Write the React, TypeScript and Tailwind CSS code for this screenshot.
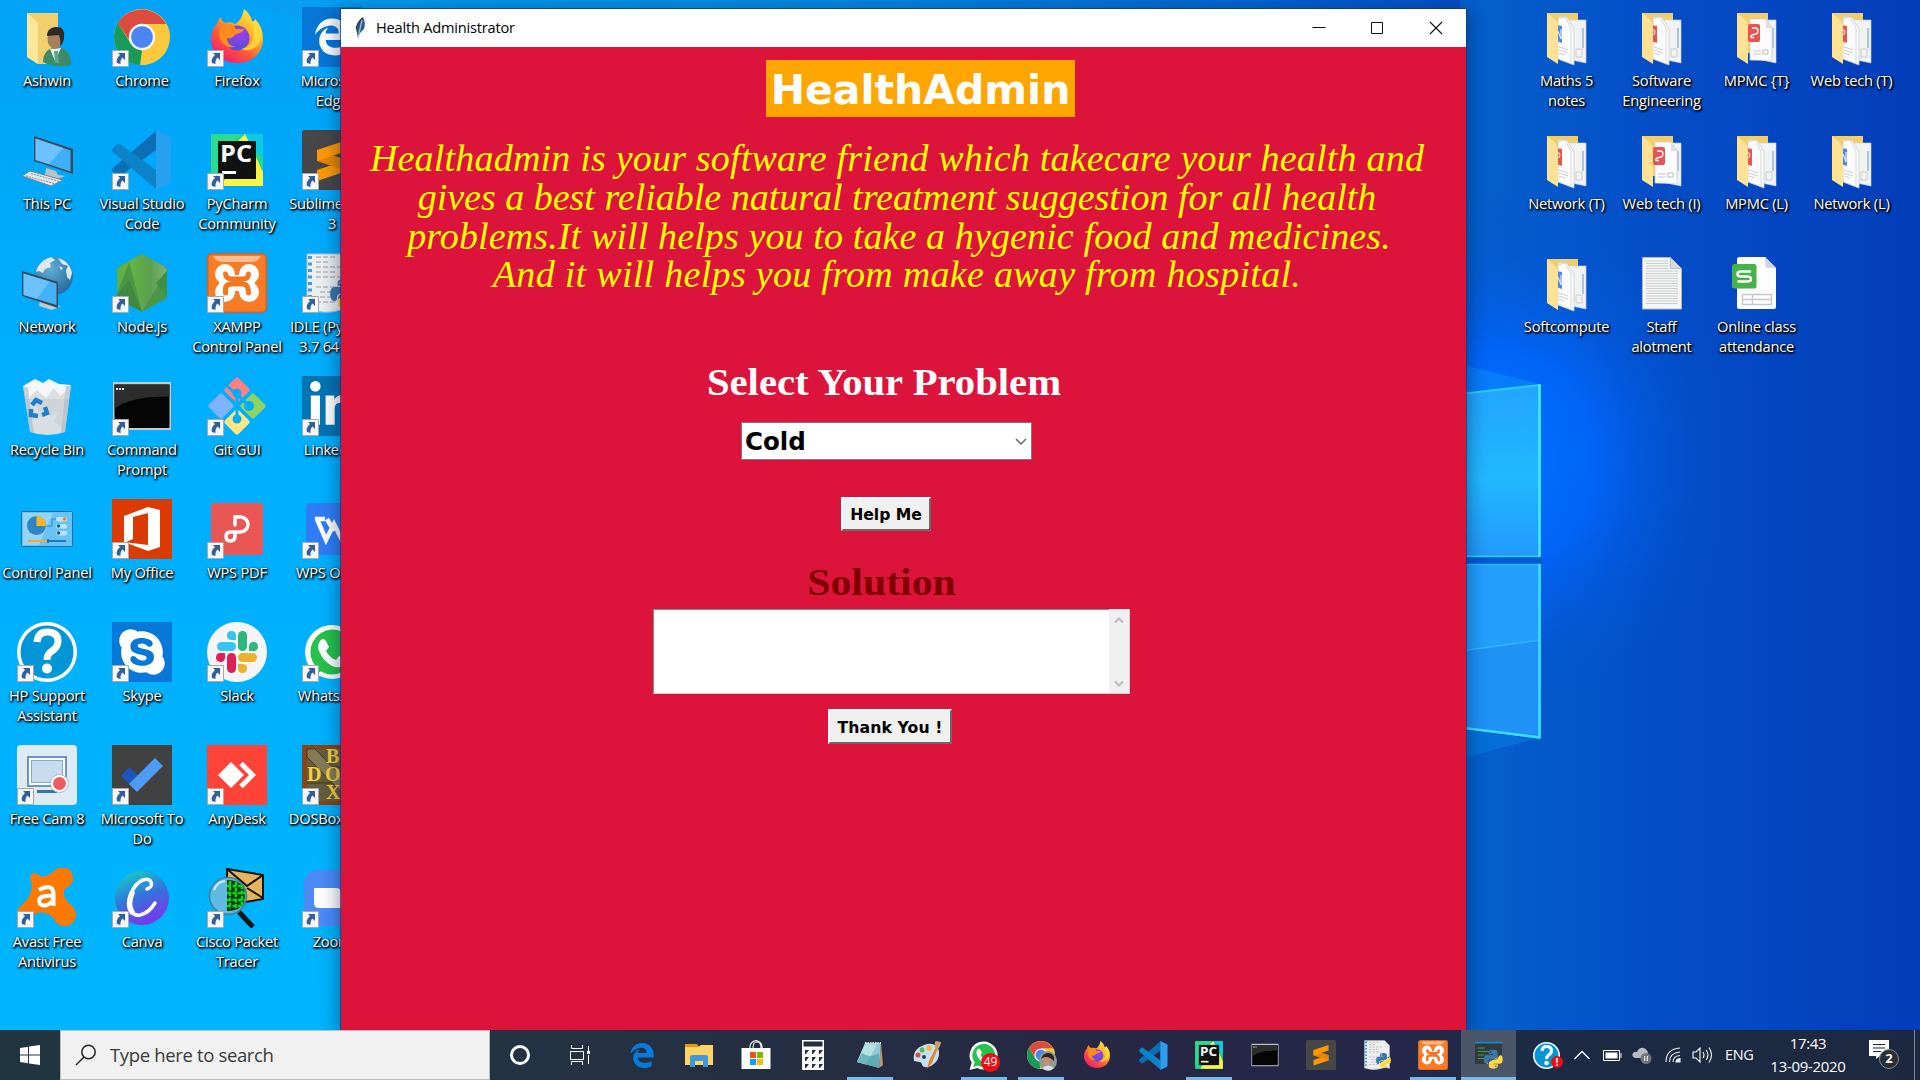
import React from "react";
import { FaEdgeLegacy, FaLinkedinIn, FaPython, FaSkype } from "react-icons/fa6";

type IconProps = { className?: string };

function Art({ className = "h-[60px] w-[60px]", children }: { className?: string; children: React.ReactNode }) {
  return (
    <svg viewBox="0 0 60 60" className={className}>
      {children}
    </svg>
  );
}

/* ---------- desktop icons ---------- */

const UserFolder = ({ className }: IconProps) => (
  <Art className={className}>
    <path d="M10 6h31v51H21L10 50z" fill="#f2cf6b" />
    <path d="M10 6l11 10v41l-11-7z" fill="#ffe79a" />
    <path d="M26 55c0-9 5-13 10-14h7c7 1 11 6 11 17-9 2-20 2-28-3z" fill="#3f8a66" />
    <path d="M33 42l5 12 6-13z" fill="#e8eef0" />
    <path d="M37 44h4l1 12h-4z" fill="#59a78c" />
    <ellipse cx="38" cy="32" rx="7.5" ry="10" fill="#a77f5c" />
    <path d="M30 29c0-7 5-9 10-9 6 0 8 5 7 10 0 4-2 8-4 9 1-4 0-8-1-11z" fill="#2e2a28" />
  </Art>
);

const Chrome = ({ className }: IconProps) => (
  <Art className={className}>
    <circle cx="30" cy="30" r="28" fill="#fdc93a" />
    <path d="M5.8 16A28 28 0 0 1 54.200 17H30L19 36z" fill="#dd4b3e" />
    <path d="M5.800 16L19 37 30 44 28 57.900A28 28 0 0 1 5.800 16z" fill="#169b58" />
    <path d="M30 17h24.200A28 28 0 0 1 29 58l12-21z" fill="#fdc93a" />
    <circle cx="30" cy="30" r="13.200" fill="#f5f5f5" />
    <circle cx="30" cy="30" r="10.800" fill="#4a86f3" />
  </Art>
);

const Firefox = ({ className }: IconProps) => (
  <Art className={className}>
    <defs>
      <linearGradient id="ffBody" x1="0.9" y1="0" x2="0.2" y2="1">
        <stop offset="0" stopColor="#fff44f" />
        <stop offset="0.35" stopColor="#ffb72a" />
        <stop offset="0.65" stopColor="#ff5a36" />
        <stop offset="1" stopColor="#f0127a" />
      </linearGradient>
      <radialGradient id="ffCore" cx="0.6" cy="0.3" r="0.8">
        <stop offset="0" stopColor="#a43bf0" />
        <stop offset="1" stopColor="#4d4fd6" />
      </radialGradient>
    </defs>
    <path d="M37 2c5 4 7 8 8 12 2 1 3 0 3-2 6 7 8 13 8 20 0 14-11 24-26 24S4 45 4 32c0-7 3-12 6-15 0-3 2-5 4-7 0 3 2 5 4 6 3-1 7-1 10 1 4-2 7-6 9-15z" fill="url(#ffBody)" />
    <circle cx="30" cy="31" r="12.500" fill="url(#ffCore)" />
    <path d="M14 17c6-2 13 0 15 5h8c-1 4-6 4-9 6-3 3-5 4-8 3 0 4 3 8 8 9-9 2-16-5-16-13 0-4 1-7 2-10z" fill="#ff8a1f" />
    <path d="M37 2c8 7 9 14 10 22 1 11-6 17-13 18 10 4 20-3 21-14 0-6-2-11-7-16 0 2-1 3-3 2-1-4-3-8-8-12z" fill="#ffdc3c" opacity="0.85" />
  </Art>
);

const EdgeTile = () => (
  <div className="flex h-[60px] w-[60px] items-center justify-center bg-[#0677d7]">
    <FaEdgeLegacy className="h-[42px] w-[38px] text-white" />
  </div>
);

const ThisPC = ({ className }: IconProps) => (
  <Art className={className}>
    <path d="M29 38l10 3 2 4 8 1-9 3-12-4z" fill="#b9c2c8" />
    <path d="M17 6l39 13v25L17 31z" fill="#3a4a58" />
    <path d="M18.500 8.500l35 12v21L18.500 30z" fill="#3fb0f8" />
    <path d="M18.500 8.500l28 9.600L32 34l-13.500-4z" fill="#7fcbff" opacity="0.7" />
    <path d="M5 46l8-5 33 9-12 6z" fill="#e3e6e8" stroke="#77828a" />
    <path d="M9 46l30 8M14 43.500l28 8" stroke="#8a949b" strokeDasharray="2 1" />
  </Art>
);

const VsCode = ({ className }: IconProps) => (
  <Art className={className}>
    <path d="M44 1v19L8 46q-2 1-4-1l-3-3q-2-2 0-4z" fill="#0a70b3" />
    <path d="M44 59V40L8 14q-2-1-4 1l-3 3q-2 2 0 4z" fill="#0c83c8" />
    <path d="M44 0l13 6q2 1 2 3v42q0 2-2 3l-13 6z" fill="#27a0f0" />
  </Art>
);

const PyCharm = ({ className }: IconProps) => (
  <Art className={className}>
    <path d="M4 4h52v52H4z" fill="#21d789" />
    <path d="M32 4h24v24L42 14z" fill="#0bcbe0" />
    <path d="M30 12l8-8 5 10 13 28v14H14l8-14z" fill="#f5f549" />
    <path d="M4 4h30L4 50z" fill="#2adb90" />
    <path d="M11 11h38v38H11z" fill="#111" />
    <text x="13" y="32" fontSize="24" fontWeight="700" fill="#fff" fontFamily="Open Sans, sans-serif" textLength="32" lengthAdjust="spacingAndGlyphs">PC</text>
    <path d="M15 41h14v3H15z" fill="#fff" />
  </Art>
);

const Sublime = ({ className }: IconProps) => (
  <Art className={className}>
    <rect width="60" height="60" rx="3" fill="#474747" />
    <path d="M45 30L15 40v11l30-10z" fill="#ff9800" />
    <path d="M15 20l30 10v11L15 31z" fill="#ec8400" />
    <path d="M45 10L15 20v11l30-10z" fill="#ff9800" />
  </Art>
);

const NetworkPC = ({ className }: IconProps) => (
  <Art className={className}>
    <defs>
      <radialGradient id="globe" cx="0.4" cy="0.3" r="0.8">
        <stop offset="0" stopColor="#62aed8" />
        <stop offset="1" stopColor="#1f6496" />
      </radialGradient>
    </defs>
    <circle cx="37" cy="23" r="19" fill="url(#globe)" />
    <path d="M19 19c2-8 8-13 15-15l4 3-5 3 1 4-6 2-2 4-4-2zM41 5c8 2 13 8 14 15l-2 7-3-3-1-7 2-4-6-2zM42 13l4 2-2 2z" fill="#dcebe9" />
    <path d="M23 46l12 3 1 3 8 1-9 4-13-4z" fill="#c3cbd0" />
    <path d="M5 18l36 11v26L5 43z" fill="#34495a" />
    <path d="M6.500 20.500l33 10V52l-33-10z" fill="#44b2f8" />
    <path d="M6.500 20.500l26 8L20 46 6.500 42z" fill="#86cdff" opacity="0.6" />
  </Art>
);

const NodeJs = ({ className }: IconProps) => (
  <Art className={className}>
    <defs>
      <linearGradient id="nodeMain" x1="0" x2="1">
        <stop offset="0" stopColor="#66b545" />
        <stop offset="0.55" stopColor="#5aa04f" />
        <stop offset="1" stopColor="#7fb36c" />
      </linearGradient>
    </defs>
    <path d="M30 1l25 14v30L30 59 5 45V15z" fill="#4d9648" />
    <path d="M30 1l-13 9-12 30V15z" fill="#62b03f" />
    <path d="M17 8L30 1l22 12 3 4-25 42z" fill="url(#nodeMain)" />
    <path d="M5 42l12-15L30 59 5 45z" fill="#3f8a3c" />
    <path d="M44 30l11 14v-26z" fill="#3f8f49" />
  </Art>
);

const Xampp = ({ className }: IconProps) => (
  <Art className={className}>
    <rect width="60" height="60" rx="5" fill="#d9601a" />
    <rect x="1.500" y="1.500" width="57" height="57" rx="4" fill="#fb7a24" />
    <path d="M6 3h48q-3 6-10 6H16Q9 9 6 3z" fill="#fff" opacity="0.5" />
    <g fill="#fff">
      <circle cx="18" cy="21" r="10" />
      <circle cx="42" cy="21" r="10" />
      <circle cx="18" cy="39" r="10" />
      <circle cx="42" cy="39" r="10" />
      <path d="M12 22h36v16H12z" />
    </g>
    <path d="M18.500 21q1 5 6 5h11q6 0 6-5M18.500 40v-4q0-5 6-5h11q6 0 6 9" fill="none" stroke="#f47720" strokeWidth="5" strokeLinecap="round" />
    <path d="M27 9h6v9h-6zM27 42h6v10h-6z" fill="#fb7a24" />
  </Art>
);

const PyFile = ({ className }: IconProps) => (
  <Art className={className}>
    <path d="M5 1h40l10 10v46q-8-4-16 0-16 5-34-1z" fill="#eceeef" stroke="#b9bec2" />
    <path d="M8 3v52" stroke="#3ba0dd" strokeWidth="4" strokeDasharray="3 3.500" />
    <path d="M14 4h20M14 9h12M14 14h26M14 19h20M14 24h24M14 34h18M18 39h14M18 44h16M14 49h20" stroke="#b3b8bc" strokeWidth="1.500" strokeDasharray="5 2" />
    <defs>
      <linearGradient id="pySnake" x1="0" y1="0" x2="0.6" y2="1">
        <stop offset="0.6" stopColor="#3b77a9" />
        <stop offset="0.62" stopColor="#ffd845" />
      </linearGradient>
    </defs>
    <FaPython x="26" y="24" size={34} fill="url(#pySnake)" stroke="none" />
  </Art>
);

const RecycleBin = ({ className }: IconProps) => (
  <Art className={className}>
    <path d="M6 10l48-1-6 47q-18 6-35 0z" fill="#d9dee2" />
    <path d="M6 10l12-7 8 4 6-4 10 5 12 1-3 14H9z" fill="#f4f6f7" />
    <path d="M12 22l8-8 9 8 8-10 6 8 7-6-4 38-9-6 5-10-9 4-3-12-7 8z" fill="#c6ccd1" opacity="0.55" />
    <path d="M6 10l7 46 4 1L11 12zM54 9l-6 47-4 1 5-47z" fill="#a9b5be" opacity="0.6" />
    <g fill="none" stroke="#1d7fd0" strokeWidth="4.500">
      <path d="M15 29l4-5 6 3M28 31l2 6-5 2M21 40l-7-1v-6" />
    </g>
  </Art>
);

const CommandPrompt = ({ className }: IconProps) => (
  <Art className={className}>
    <path d="M1 6h58v48H1z" fill="#c2cbd1" />
    <path d="M2.500 8.500h55V52h-55z" fill="#050505" />
    <path d="M2.500 8.500h55v12Q18 20 2.500 33z" fill="#2d2d2d" />
    <path d="M4 13h8" stroke="#ddd" strokeWidth="2" strokeDasharray="2 1" />
  </Art>
);

const GitGui = ({ className }: IconProps) => (
  <Art className={className}>
    <rect x="4.500" y="20.500" width="19" height="19" rx="2" transform="rotate(45 14 30)" fill="#80b3ff" />
    <rect x="20.500" y="4.500" width="19" height="19" rx="2" transform="rotate(45 30 14)" fill="#ff8080" />
    <rect x="36.500" y="20.500" width="19" height="19" rx="2" transform="rotate(45 46 30)" fill="#8dd35f" />
    <rect x="20.500" y="36.500" width="19" height="19" rx="2" transform="rotate(45 30 46)" fill="#ffe680" />
    <path d="M18 8l13 12M30 16v26M31 19l10 10" stroke="#03adfc" strokeWidth="3" />
    <g fill="#03adfc">
      <circle cx="30" cy="17" r="4.500" />
      <circle cx="42" cy="30" r="5" />
      <circle cx="30" cy="43" r="4.500" />
    </g>
  </Art>
);

const LinkedIn = () => (
  <div className="flex h-[60px] w-[60px] items-center justify-center bg-[#0274b3]">
    <FaLinkedinIn className="h-[50px] w-[46px] text-white" />
  </div>
);

const ControlPanel = ({ className }: IconProps) => (
  <Art className={className}>
    <rect x="4.500" y="12.500" width="51" height="35" rx="1" fill="#69c3f5" stroke="#1f6fa6" />
    <path d="M6 14h30L22 46H6z" fill="#a5dcfb" opacity="0.7" />
    <circle cx="19.500" cy="26.500" r="9.500" fill="#2c86c4" />
    <path d="M19.500 27V16.500A10 10 0 0 1 29 27z" fill="#ffb420" />
    <path d="M29 27h6v-7h5" fill="none" stroke="#3587bd" />
    <rect x="39" y="18" width="11" height="4.500" rx="2" fill="#bce5fb" />
    <rect x="39" y="25" width="11" height="4.500" rx="2" fill="#bce5fb" />
    <rect x="39" y="32" width="11" height="4.500" rx="2" fill="#bce5fb" />
    <circle cx="47.500" cy="20" r="1.800" fill="#ff7d1a" />
    <circle cx="41.500" cy="27" r="1.800" fill="#1b5e8f" />
    <circle cx="41.500" cy="34" r="1.800" fill="#1b5e8f" />
    <path d="M11 42h20" stroke="#ffa51e" strokeWidth="2" />
    <path d="M31 42h18M31 40v4" stroke="#1e77c0" strokeWidth="2" />
  </Art>
);

const Office = ({ className }: IconProps) => (
  <Art className={className}>
    <path d="M0 0h60v60H0z" fill="#d93b02" />
    <path d="M12 17l24-9 12 3v37l-12 4-24-9 24 3V14l-15 4v22l-9 4z" fill="#fff" />
  </Art>
);

const WpsPdf = ({ className }: IconProps) => (
  <Art className={className}>
    <rect x="4" y="4" width="52" height="52" rx="3" fill="#ea5654" />
    <path d="M28 26v-8h5.500a7.500 7.500 0 0 1 0 15H23.500q-4.500 0-4.500 4.500t4.500 4.500 4.500-5v-2" fill="none" stroke="#fff" strokeWidth="3.500" strokeLinecap="round" />
  </Art>
);

const WpsOffice = ({ className }: IconProps) => (
  <Art className={className}>
    <rect x="4" y="4" width="52" height="52" rx="5" fill="#2f7df6" />
    <path d="M13 20h10M15 20l9 21 8-16 8 16 9-21M25 20l7 12" fill="none" stroke="#fff" strokeWidth="4.500" />
  </Art>
);

const HpSupport = ({ className }: IconProps) => (
  <Art className={className}>
    <circle cx="30" cy="30" r="30" fill="#fff" />
    <circle cx="30" cy="30" r="26.500" fill="#0296d9" />
    <path d="M20 20q1-10 10-10 11 0 11 9 0 6-6 10-5 3-5 9" fill="none" stroke="#fff" strokeWidth="7" />
    <circle cx="30" cy="46.500" r="5" fill="#fff" />
  </Art>
);

const SkypeTile = () => (
  <div className="flex h-[60px] w-[60px] items-center justify-center bg-[#0678d7]">
    <FaSkype className="h-[52px] w-[46px] text-white" />
  </div>
);

const Slack = ({ className }: IconProps) => (
  <Art className={className}>
    <circle cx="30" cy="30" r="30" fill="#f6f6f6" />
    <rect x="10" y="20" width="19" height="9" rx="4.500" fill="#36c5f0" />
    <path d="M29 18h-5a4.500 4.500 0 1 1 5-4.500z" fill="#36c5f0" />
    <rect x="31" y="9" width="9" height="20" rx="4.500" fill="#2eb67d" />
    <path d="M42 29v-5a4.500 4.500 0 1 1 4.500 5z" fill="#2eb67d" />
    <rect x="31" y="31" width="19" height="9" rx="4.500" fill="#ecb22e" />
    <path d="M31 42h5a4.500 4.500 0 1 1-5 4.500z" fill="#ecb22e" />
    <rect x="20" y="31" width="9" height="20" rx="4.500" fill="#e01e5a" />
    <path d="M18 31v5a4.500 4.500 0 1 1-4.500-5z" fill="#e01e5a" />
  </Art>
);

const WhatsApp = ({ className }: IconProps) => (
  <Art className={className}>
    <path d="M30 3a27 27 0 1 1-12 51L3 58l4-14A27 27 0 0 1 30 3z" fill="#fff" />
    <path d="M30 7.500a22.500 22.500 0 1 1-11 42l-9 3 3-9A22.500 22.500 0 0 1 30 7.500z" fill="#25c34b" />
    <path d="M18 19q3-4 6 0l3 6-3 4q4 7 10 9l3-4 7 3q2 3-2 6-5 4-12 1-9-5-13-15-2-6 1-10z" fill="#fff" />
  </Art>
);

const FreeCam = ({ className }: IconProps) => (
  <Art className={className}>
    <rect width="60" height="60" rx="4" fill="#deebf5" />
    <rect x="11" y="12" width="38" height="29" fill="#fff" stroke="#4176ad" strokeWidth="1.500" />
    <rect x="14.500" y="15.500" width="31" height="22" fill="#c6dcee" stroke="#88a9c7" />
    <path d="M20 45h20v3H20z" fill="#3971ab" />
    <circle cx="42.500" cy="38.500" r="9" fill="#fff" stroke="#a8bccd" />
    <circle cx="42.500" cy="38.500" r="6.500" fill="#f15b5e" />
  </Art>
);

const Todo = ({ className }: IconProps) => (
  <Art className={className}>
    <path d="M0 0h60v60H0z" fill="#414141" />
    <path d="M17 22l13 13-9 8L9 31z" fill="#1a56bc" />
    <path d="M43 13l8 8-26 26-8-8z" fill="#4f9cf8" />
  </Art>
);

const AnyDesk = ({ className }: IconProps) => (
  <Art className={className}>
    <path d="M0 0h60v60H0z" fill="#ff4336" />
    <path d="M24 17l13 13-13 13-13-13z" fill="#fff" />
    <path d="M34 18.500L45.500 30 34 41.500" fill="none" stroke="#fff" strokeWidth="5" />
  </Art>
);

const DosBox = ({ className }: IconProps) => (
  <Art className={className}>
    <path d="M0 0h60v60H0z" fill="#8a4418" />
    <path d="M5 4h51v52H5z" fill="#655e3c" />
    <path d="M5 22h51M5 38h51" stroke="#3d3a24" />
    <path d="M5 4h8l43 44v8h-8L5 12z" fill="#857b55" stroke="#3d3a24" />
    <g fontFamily="Liberation Serif, serif" fontWeight="700" fontSize="20" fill="#f5cf3e">
      <text x="24" y="18">B</text>
      <text x="5" y="36">D</text>
      <text x="23" y="36">O</text>
      <text x="41" y="36">S</text>
      <text x="24" y="54">X</text>
    </g>
  </Art>
);

const Avast = ({ className }: IconProps) => (
  <Art className={className}>
    <path d="M13 10q0-4 4-5 3 0 6 3 7 2 14-5 6-6 13-3 7 4 6 12-1 5-7 8-4 3-1 10 2 4 7 8 6 6 3 13-4 8-12 7-6-1-9-7-6-8-17-6-5 2-8 6-6 5-11 0-3-4 0-10 2-3 6-6 7-7 8-16 0-4-2-9z" fill="#ff7800" />
    <path d="M22 22q13-7 14.500 3v13M36 28q-14-1-14 5 1 6 8 4 5-2 6-6" fill="none" stroke="#fff" strokeWidth="4" />
  </Art>
);

const Canva = ({ className }: IconProps) => (
  <Art className={className}>
    <defs>
      <linearGradient id="canvaBg" x1="0.2" y1="0" x2="0.6" y2="1">
        <stop offset="0" stopColor="#0fd0c6" />
        <stop offset="0.5" stopColor="#3573dc" />
        <stop offset="1" stopColor="#7d35ef" />
      </linearGradient>
    </defs>
    <circle cx="30" cy="30" r="27" fill="url(#canvaBg)" />
    <path d="M35 21q6-2 4-7-2-4-8-2-8 3-12 14-4 11 0 17 3 5 9 4 9-2 15-12" fill="none" stroke="#fff" strokeWidth="3.500" strokeLinecap="round" />
    <path d="M20 25q-5 12 0 19" fill="none" stroke="#fff" strokeWidth="5.500" strokeLinecap="round" />
  </Art>
);

const Cisco = ({ className }: IconProps) => (
  <Art className={className}>
    <path d="M20 1l36 6v24l-36 6z" fill="#e4b55d" stroke="#111" strokeWidth="2" />
    <path d="M20 1l20 17L56 7M40 20l16 10" fill="none" stroke="#111" strokeWidth="2" />
    <path d="M32 44l14 15" stroke="#151515" strokeWidth="5" />
    <circle cx="21" cy="28" r="18.500" fill="#5fb9e0" stroke="#3b7f9f" strokeWidth="1.500" />
    <path d="M20 12q16 0 18 13v8q-4 10-18 10z" fill="#0a3d0a" />
    <path d="M23 13v28M29 14v26M35 17v20M20 18h15M20 25h18M20 32h18M20 38h14" stroke="#0fd41c" strokeWidth="2.500" strokeDasharray="4 1.500" />
    <path d="M7 22q3-8 11-9" stroke="#d4f1fb" strokeWidth="2" fill="none" />
  </Art>
);

const Zoom = ({ className }: IconProps) => (
  <Art className={className}>
    <rect x="2" y="2" width="56" height="56" rx="14" fill="#4b8bf9" />
    <path d="M12 20h22q5 0 5 5v15H17q-5 0-5-5zM41 27l9-6v18l-9-6z" fill="#fff" />
  </Art>
);

type Badge = "word" | "pdf";

function Folder({ badge, single = false }: { badge: Badge; single?: boolean }) {
  const color = badge === "word" ? "#4a86ec" : "#ea5450";
  return (
    <Art>
      <path d="M10 6h31v40H10z" fill="#f3cd6a" />
      <path d="M30 13l19 0v43l-19-4z" fill="#f1f2f3" stroke="#d0d4d8" strokeWidth="0.600" />
      <path d="M46 21v20" stroke="#6d96c9" />
      <path d="M39 42h6v8h-6z" fill="none" stroke="#ccc" />
      {single ? (
        <>
          <path d="M23 12h16l6 8v34q-10-1-22-1z" fill="#fcfcfc" stroke="#cfd2d5" strokeWidth="0.800" />
          <path d="M39 12l6 9h-6z" fill="#dcdfe1" />
          <path d="M26 44h8M26 47h8" stroke="#c3c7ca" />
          <rect x="36" y="43" width="5" height="4" fill="none" stroke="#b9bdc0" />
          <rect x="21" y="17" width="12" height="18" rx="2" fill={color} />
          <path d="M25 21h3q3 0 3 3t-4 3.500-3 3h3" fill="none" stroke="#fff" strokeWidth="1.300" />
        </>
      ) : (
        <>
          <path d="M21 10h9l7 12v36l-16-6z" fill="#fcfcfc" stroke="#c9cdd0" strokeWidth="0.800" />
          <path d="M21 12l7-2 6 11v35" fill="none" stroke="#d5d8da" />
          <path d="M22 40l9 3M22 43l9 3M22 46l6 2" stroke="#bfc4c8" strokeWidth="0.800" />
          <path d="M19 18l6 1v17l-6-2z" fill={color} />
          <path d={badge === "word" ? "M24 22v10l-3-8" : "M20 23q3-1 3 2t-3 3"} fill="none" stroke="#fff" />
        </>
      )}
      <path d="M10 6l7 6q4 3 4 8v37l-11-7z" fill="#ffe293" />
    </Art>
  );
}

const TextDoc = () => (
  <Art>
    <path d="M10.500 4.500h28l11 11V56h-39z" fill="#f6f6f5" stroke="#b5b8ba" />
    <path d="M38.500 4.500l11 11h-11z" fill="#d9dcde" stroke="#a9adb0" strokeWidth="0.700" />
    <path d="M14 8h22M14 10.500h22M14 13h22M14 15.500h22M14 18h32M14 20.500h32M14 23h32M14 25.500h32M14 28h32M14 30.500h32M14 33h32M14 35.500h32M14 38h32M14 40.500h32M14 43h32M14 45.500h32M14 48h32M14 50.500h32" stroke="#c6c9cb" strokeWidth="0.900" />
  </Art>
);

const SheetDoc = () => (
  <Art>
    <path d="M13 4h25l11 11v39q0 2-2 2H12q-2 0-2-2V6q0-2 3-2z" fill="#fdfdfd" />
    <path d="M38 4l11 11h-8q-3 0-3-3z" fill="#d3d7da" />
    <rect x="5" y="11" width="24.500" height="24.500" rx="2.500" fill="#45b24a" />
    <path d="M24 18.500H14q-3.500 0-3.500 2.500t3.500 2.500h6q4 0 4 2.500t-4 2.500H10.500" fill="none" stroke="#fff" strokeWidth="2.500" />
    <path d="M15.500 41.500h29v10h-29zM15.500 46.500h29M25.500 41.500v10" fill="none" stroke="#c5c9cc" strokeWidth="1.300" />
  </Art>
);

/* ---------- desktop cell ---------- */

function DesktopItem({ icon, label, shortcut }: { icon: React.ReactNode; label: string; shortcut?: boolean }) {
  return (
    <div className="flex h-[123px] w-[95px] shrink-0 flex-col items-center pt-[7px]">
      <div className="relative h-[60px] w-[60px]">
        {icon}
        {shortcut && (
          <svg viewBox="0 0 17 17" className="absolute bottom-0 left-0 h-[17px] w-[17px]">
            <path d="M.5.5h16v16H.5z" fill="#f8f8f8" stroke="#a9a9a9" />
            <path d="M6 3h7v7l-2.500-2.500Q8 10 8.500 14L5 13q-1.500-4 3-8z" fill="#315f9e" />
          </svg>
        )}
      </div>
      <div className="mt-[3px] w-full whitespace-pre text-center text-[14.700px] leading-5 tracking-[-0.240px] text-white [text-shadow:1px_1px_2px_#000,1px_1px_2px_#000,0_1px_3px_rgba(0,0,0,0.8)]">
        {label}
      </div>
    </div>
  );
}

const leftItems: [React.ReactNode, string, boolean?][] = [
  [<UserFolder />, "Ashwin"],
  [<Chrome />, "Chrome", true],
  [<Firefox />, "Firefox", true],
  [<EdgeTile />, "Microsoft\nEdge", true],
  [<ThisPC />, "This PC"],
  [<VsCode />, "Visual Studio\nCode", true],
  [<PyCharm />, "PyCharm\nCommunity", true],
  [<Sublime />, "Sublime Text\n3", true],
  [<NetworkPC />, "Network"],
  [<NodeJs />, "Node.js", true],
  [<Xampp />, "XAMPP\nControl Panel", true],
  [<PyFile />, "IDLE (Python\n3.7 64-bit)", true],
  [<RecycleBin />, "Recycle Bin"],
  [<CommandPrompt />, "Command\nPrompt", true],
  [<GitGui />, "Git GUI", true],
  [<LinkedIn />, "LinkedIn", true],
  [<ControlPanel />, "Control Panel"],
  [<Office />, "My Office", true],
  [<WpsPdf />, "WPS PDF", true],
  [<WpsOffice />, "WPS Office", true],
  [<HpSupport />, "HP Support\nAssistant", true],
  [<SkypeTile />, "Skype", true],
  [<Slack />, "Slack", true],
  [<WhatsApp />, "WhatsApp", true],
  [<FreeCam />, "Free Cam 8", true],
  [<Todo />, "Microsoft To\nDo", true],
  [<AnyDesk />, "AnyDesk", true],
  [<DosBox />, "DOSBox 0.74", true],
  [<Avast />, "Avast Free\nAntivirus", true],
  [<Canva />, "Canva", true],
  [<Cisco />, "Cisco Packet\nTracer", true],
  [<Zoom />, "Zoom", true],
];

const rightItems: [React.ReactNode, string][] = [
  [<Folder badge="word" />, "Maths 5\nnotes"],
  [<Folder badge="pdf" />, "Software\nEngineering"],
  [<Folder badge="pdf" single />, "MPMC {T}"],
  [<Folder badge="pdf" />, "Web tech (T)"],
  [<Folder badge="pdf" />, "Network (T)"],
  [<Folder badge="pdf" single />, "Web tech (I)"],
  [<Folder badge="pdf" />, "MPMC (L)"],
  [<Folder badge="word" />, "Network (L)"],
  [<Folder badge="word" />, "Softcompute"],
  [<TextDoc />, "Staff\nalotment"],
  [<SheetDoc />, "Online class\nattendance"],
];

/* ---------- wallpaper ---------- */

function Wallpaper() {
  return (
    <svg viewBox="0 0 1920 1080" className="absolute inset-0 h-full w-full">
      <defs>
        <linearGradient id="wpLeft" x1="0" y1="0" x2="0" y2="1">
          <stop offset="0" stopColor="#00a3f7" />
          <stop offset="0.4" stopColor="#00afff" />
          <stop offset="1" stopColor="#00b5fd" />
        </linearGradient>
        <linearGradient id="wpTop">
          <stop offset="0" stopColor="#009ff2" />
          <stop offset="0.5" stopColor="#0088e4" />
          <stop offset="1" stopColor="#0450c8" />
        </linearGradient>
        <linearGradient id="wpRight">
          <stop offset="0" stopColor="#0462cc" />
          <stop offset="0.4" stopColor="#044ec8" />
          <stop offset="1" stopColor="#033db9" />
        </linearGradient>
        <radialGradient id="wpGlow">
          <stop offset="0" stopColor="#0074ff" />
          <stop offset="0.4" stopColor="#0066ff" stopOpacity="0.85" />
          <stop offset="0.7" stopColor="#035ae0" stopOpacity="0.4" />
          <stop offset="1" stopColor="#0450cc" stopOpacity="0" />
        </radialGradient>
        <linearGradient id="paneTop" x1="0" y1="0" x2="0" y2="1">
          <stop offset="0" stopColor="#22a5ff" />
          <stop offset="0.55" stopColor="#21b8ff" />
          <stop offset="1" stopColor="#2299fb" />
        </linearGradient>
      </defs>
      <path d="M0 0h345v1080H0z" fill="url(#wpLeft)" />
      <path d="M190-10q100 22 155 46v-46z" fill="#0b9cf0" opacity="0.6" />
      <path d="M341 0h1125v40H341z" fill="url(#wpTop)" />
      <path d="M1460 0h460v1080h-460z" fill="url(#wpRight)" />
      <ellipse cx="1500" cy="460" rx="240" ry="270" fill="url(#wpGlow)" />
      <path d="M1460 364l80 20-80 9z" fill="#109aff" opacity="0.4" />
      <path d="M1460 394l81-9.500V557h-81z" fill="url(#paneTop)" />
      <path d="M1460 394l80-9M1460 556.500h80" fill="none" stroke="#2bcdff" strokeWidth="2" />
      <path d="M1539.500 384v173" stroke="#44eaff" strokeWidth="2.500" />
      <path d="M1460 557.500h82v6h-82z" fill="#0358d4" />
      <path d="M1460 564h81v175l-81-11z" fill="#229ffd" />
      <path d="M1460 651l80-11v98l-80-10z" fill="#1f92f7" />
      <path d="M1460 651l80-11M1460 564.500h80" stroke="#2fb8ff" strokeWidth="1.500" />
      <path d="M1539.500 564v174.500M1460 727.500l80 10" fill="none" stroke="#3ce0ff" strokeWidth="2.500" />
      <path d="M1460 729l75 10-75 20z" fill="#0480e8" opacity="0.5" />
    </svg>
  );
}

/* ---------- application window ---------- */

function AppWindow() {
  return (
    <div className="absolute left-[341px] top-[9px] flex h-[1021px] w-[1125px] flex-col bg-[#dc143c] shadow-[0_0_0_1px_rgba(10,60,110,0.7),0_4px_16px_4px_rgba(0,20,60,0.38)]">
      <div className="flex h-[38px] shrink-0 items-center bg-white">
        <svg viewBox="0 0 14 22" className="ml-3 h-[22px] w-[14px]">
          <path d="M5 21L3 12Q3 5 10 0q3 6 1 12l-4 4z" fill="#34597f" />
          <path d="M5 21L9 3" stroke="#9ec1dd" strokeWidth="1.200" />
          <path d="M3 12q1-5 6-11" stroke="#16293d" fill="none" />
        </svg>
        <span className="ml-[9px] text-[14.600px] tracking-[-0.200px] text-black">Health Administrator</span>
        <div className="ml-auto flex">
          <svg viewBox="0 0 58 38" className="h-[38px] w-[58px]">
            <path d="M20.500 18.500h13" stroke="#111" />
          </svg>
          <svg viewBox="0 0 58 38" className="h-[38px] w-[58px]">
            <path d="M21.500 13.500h11v11h-11z" fill="none" stroke="#111" />
          </svg>
          <svg viewBox="0 0 58 38" className="h-[38px] w-[58px]">
            <path d="M22 13l12 12M34 13L22 25" stroke="#111" strokeWidth="1.100" />
          </svg>
        </div>
      </div>

      <div className="mt-[13px] ml-[425px] flex h-[57px] w-[309px] items-center justify-center bg-[#ffa500] pt-[3px] font-['DejaVu_Sans'] text-[41px] font-bold leading-none text-white">
        HealthAdmin
      </div>

      <div className="mt-[22px] flex w-[1112px] flex-col items-center whitespace-nowrap font-['Liberation_Serif'] text-[38px] italic leading-[38.800px] text-[#ffff00]">
        <div className="tracking-[0.200px]">Healthadmin is your software friend which takecare your health and</div>
        <div>gives a best reliable natural treatment suggestion for all health</div>
        <div className="pl-1 tracking-[0.120px]">problems.It will helps you to take a hygenic food and medicines.</div>
        <div className="tracking-[0.300px]">And it will helps you from make away from hospital.</div>
      </div>

      <div className="mt-[67px] w-[1086px] origin-center scale-x-[1.100] text-center font-['Liberation_Serif'] text-[37px] font-bold leading-[44px] text-white">
        Select Your Problem
      </div>

      <div className="mt-[17px] ml-[400px] flex h-[38px] w-[291px] items-center justify-between border border-[#7a7a7a] bg-white pl-[3px] pr-[4px] pt-px">
        <span className="pt-0.5 font-['DejaVu_Sans'] text-[24.500px] font-bold leading-none text-black">Cold</span>
        <svg viewBox="0 0 12 8" className="h-2 w-3">
          <path d="M1 1l5 5 5-5" fill="none" stroke="#606060" strokeWidth="1.400" />
        </svg>
      </div>

      <button className="mt-[37px] ml-[500px] h-[34px] w-[90px] whitespace-nowrap border-2 border-b-[#696969] border-l-white border-r-[#696969] border-t-white bg-[#f0f0f0] pt-[3px] font-['DejaVu_Sans'] text-[15.600px] font-bold leading-none text-black">
        Help Me
      </button>

      <div className="mt-[30px] w-[1081px] origin-center scale-x-[1.130] text-center font-['Liberation_Serif'] text-[37px] font-bold leading-[44px] text-[#800000]">
        Solution
      </div>

      <div className="mt-[4px] ml-[312px] flex h-[85px] w-[477px] border border-[#d8c8cc] border-l-[#8a8a8a] border-t-[#8a8a8a] bg-white">
        <div className="flex-1" />
        <div className="-mt-px flex w-5 flex-col items-center justify-between bg-[#f0f0f0] pt-[7px] pb-[5px]">
          <svg viewBox="0 0 10 8" className="h-2 w-[10px]">
            <path d="M1 6.500l4-4 4 4" fill="none" stroke="#bcbcbc" strokeWidth="2" />
          </svg>
          <svg viewBox="0 0 10 8" className="h-2 w-[10px]">
            <path d="M1 1.500l4 4 4-4" fill="none" stroke="#bcbcbc" strokeWidth="2" />
          </svg>
        </div>
      </div>

      <button className="mt-[15px] ml-[487px] h-[35px] w-[124px] whitespace-nowrap border-2 border-b-[#696969] border-l-white border-r-[#696969] border-t-white bg-[#f0f0f0] pt-[3px] font-['DejaVu_Sans'] text-[15.700px] font-bold leading-none tracking-[0.100px] text-black">
        Thank You !
      </button>
    </div>
  );
}

/* ---------- taskbar ---------- */

const Explorer = () => (
  <svg viewBox="0 0 28 24" className="h-6 w-7">
    <path d="M0 1h12l2 3H0z" fill="#e09b0a" />
    <path d="M0 4l13 0 3-2h12v20H0z" fill="#ffd262" />
    <path d="M5 24V14q0-2 2-2h14q2 0 2 2v10h-5v-6h-8v6z" fill="#3f97dd" />
  </svg>
);

const Store = () => (
  <svg viewBox="0 0 30 30" className="h-[30px] w-[30px]">
    <path d="M9 9V7q0-5 6-6.500Q21 2 21 7v2M12 8q0-6 4-6t4 6" fill="none" stroke="#e8e8e8" strokeWidth="1.200" />
    <path d="M.5 8h29v21h-29z" fill="#fff" />
    <path d="M9 12h6v6H9z" fill="#f25022" />
    <path d="M16 12h6v6h-6z" fill="#7fba00" />
    <path d="M9 19h6v6H9z" fill="#00a4ef" />
    <path d="M16 19h6v6h-6z" fill="#ffb900" />
  </svg>
);

const Calculator = () => (
  <svg viewBox="0 0 22 30" className="h-[30px] w-[22px]">
    <path d="M0 0h22v30H0z" fill="#fff" />
    <path d="M1.500 1.500h19v5h-19z" fill="#232f40" />
    <path d="M3 10h4l-3 4H3zM10 10h4l-3 4h-1zM17 10h4l-3 4h-1zM3 17h4l-3 4H3zM10 17h4l-3 4h-1zM17 17h4l-3 4h-1zM3 24h4l-3 4H3zM10 24h4l-3 4h-1zM17 24h4l-3 4h-1z" fill="#232f40" />
  </svg>
);

const Notepad = () => (
  <svg viewBox="0 0 28 28" className="h-7 w-7">
    <path d="M25 2l2 22-4 3z" fill="#b49a70" />
    <path d="M9 2l16 0-2 25L1 21z" fill="#8ecbd5" />
    <path d="M9 3L1 21l9 2.500L21 4z" fill="#b5e2e6" />
    <path d="M6 12L1 21l22 6V12q-9 6-17 0z" fill="#3f97a6" opacity="0.600" />
    <path d="M9 2h16" stroke="#e5e8e9" strokeWidth="2" strokeDasharray="1.500 1" />
  </svg>
);

const Paint = () => (
  <svg viewBox="0 0 30 30" className="h-[30px] w-[30px]">
    <path d="M2 21Q0 9 12 5t15 6q1 10-8 15-7 3-9-1 0-3-3-3z" fill="#c6dff0" />
    <circle cx="6" cy="15" r="2.500" fill="#e2483d" />
    <circle cx="10" cy="10" r="2.500" fill="#5fb84c" />
    <circle cx="17" cy="8" r="2.700" fill="#f3b93c" />
    <circle cx="12" cy="17" r="2" fill="#24405e" />
    <path d="M15 29l2-8 7-14 2 1-6 15z" fill="#e0852d" />
    <path d="M23 8q-1-6 1-7l5 1q0 4-3 7z" fill="#c6a176" />
  </svg>
);

const PythonApp = () => (
  <Art className="h-[30px] w-[30px]">
    <path d="M2 3h54v45H2z" fill="#343a3d" />
    <path d="M2 3h54v4H2z" fill="#1a84d2" />
    <path d="M8 16h14M8 23h22M8 30h12M8 37h14" stroke="#36a34b" strokeWidth="2" />
    <FaPython x="17" y="17" size={43} fill="url(#pySnake)" stroke="none" />
  </Art>
);

function Task({ children, open = false, tight = false }: { children: React.ReactNode; open?: boolean; tight?: boolean }) {
  return (
    <div className={"flex h-full shrink-0 flex-col items-center " + (tight ? "w-[56px]" : "w-[57px]")}>
      <div className="flex h-[47px] items-center justify-center pt-[3px]">{children}</div>
      {open && <div className="h-[3px] w-[46px] bg-[#76b9ed]" />}
    </div>
  );
}

function Taskbar() {
  return (
    <div className="absolute bottom-0 left-0 flex h-[50px] w-full items-stretch bg-[linear-gradient(90deg,#203540_0px,#233342_480px,#252c43_900px,#272744_1150px,#25284a_1400px,#1b2b43_1530px,#1c2840_1920px)]">
      <div className="flex w-[60px] items-center justify-center">
        <svg viewBox="0 0 20 20" className="h-5 w-5" fill="#fff">
          <path d="M0 3l8-1.200v7.700H0zM9 1.600L20 0v9.500H9zM0 10.500h8v7.700L0 17zM9 10.500h11V20L9 18.400z" />
        </svg>
      </div>
      <div className="flex w-[430px] items-center border border-[#bdbdbd] bg-[#f1f1f1] pl-[14px]">
        <svg viewBox="0 0 22 22" className="h-[22px] w-[22px]" fill="none" stroke="#222" strokeWidth="1.500">
          <circle cx="13.500" cy="8" r="6.700" />
          <path d="M9 13l-8 8" />
        </svg>
        <span className="ml-[13px] text-[18.500px] tracking-[-0.350px] text-[#3a3a3a]">Type here to search</span>
      </div>
      <div className="flex w-[60px] items-center justify-center">
        <div className="h-5 w-5 rounded-full border-[3px] border-white" />
      </div>
      <div className="flex w-[63px] items-center justify-center pr-[3px]">
        <svg viewBox="0 0 20 20" className="h-5 w-5" fill="none" stroke="#fff">
          <path d="M1.500 0v3.500h11V0M.5 6.500h13v8H.5zM1.500 20v-3.500h11V20M18.500 1v5M18.500 10v9" />
          <path d="M17 6h3v3h-3z" fill="#fff" stroke="none" />
        </svg>
      </div>
      <Task><FaEdgeLegacy className="h-[27px] w-[26px] text-[#0a7ada]" /></Task>
      <Task><Explorer /></Task>
      <Task><Store /></Task>
      <Task><Calculator /></Task>
      <Task open><Notepad /></Task>
      <Task><Paint /></Task>
      <Task open>
        <div className="relative">
          <WhatsApp className="h-[31px] w-[31px]" />
          <div className="absolute -right-[1px] top-[13px] flex h-[19px] w-[19px] items-center justify-center rounded-full bg-[#f00b12] text-[12px] text-white">49</div>
        </div>
      </Task>
      <Task open>
        <div className="relative">
          <Chrome className="h-[30px] w-[30px]" />
          <svg viewBox="0 0 18 20" className="absolute -right-[1px] bottom-[-1px] h-5 w-[18px]">
            <ellipse cx="9" cy="10" rx="9" ry="10" fill="#8d9a8f" />
            <ellipse cx="8" cy="10" rx="4" ry="5" fill="#c28e76" />
            <path d="M2 8q2-7 8-6 6 1 5 8-4-4-8-4-3 0-5 2z" fill="#2c2220" />
            <path d="M3 17q6-5 12 0-6 5-12 0z" fill="#d9dce2" />
          </svg>
        </div>
      </Task>
      <Task tight><Firefox className="h-[30px] w-[30px]" /></Task>
      <Task tight><VsCode className="h-[29px] w-[29px]" /></Task>
      <Task tight open><PyCharm className="h-[32px] w-[32px]" /></Task>
      <Task tight><CommandPrompt className="h-[28px] w-[28px]" /></Task>
      <Task tight><Sublime className="h-[30px] w-[30px]" /></Task>
      <Task tight><PyFile className="h-[30px] w-[30px]" /></Task>
      <Task tight open><Xampp className="h-[30px] w-[30px]" /></Task>
      <div className="flex w-[55px] shrink-0 flex-col items-center bg-[#4b5668]">
        <div className="flex h-[47px] items-center pt-[3px]"><PythonApp /></div>
        <div className="h-[3px] w-full bg-[#76b9ed]" />
      </div>

      <div className="flex flex-1 items-center">
        <div className="relative ml-[17px]">
          <HpSupport className="h-[27px] w-[27px]" />
          <div className="absolute -right-[3px] bottom-[1px] flex h-3 w-3 items-center justify-center rounded-full bg-[#f00b12] text-[10px] font-bold leading-none text-white">!</div>
        </div>
        <svg viewBox="0 0 16 10" className="ml-[14px] h-[10px] w-4">
          <path d="M.5 9L8 1.500 15.500 9" fill="none" stroke="#fff" strokeWidth="1.300" />
        </svg>
        <svg viewBox="0 0 19 11" className="ml-[13px] h-[11px] w-[19px]">
          <path d="M.5.5h16v10H.5zM18 3v5" fill="none" stroke="#fff" />
          <path d="M2.500 2.500h12v6h-12z" fill="#fff" />
        </svg>
        <svg viewBox="0 0 20 17" className="ml-[10px] h-[17px] w-5">
          <path d="M3 11q-4-2-2-5 2-2 4-1 2-5 7-4 4 2 4 6v4z" fill="#b5bac4" />
          <circle cx="14" cy="11.500" r="5.500" fill="#70747c" />
          <path d="M12.700 9v5M15.300 9v5" stroke="#fff" />
        </svg>
        <svg viewBox="0 0 16 16" className="ml-[13px] h-4 w-4" fill="none" stroke="#e8ebef" strokeWidth="1.100">
          <path d="M1 15Q1 2 15 1M4.500 15q0-9 10.500-10M8 15q0-6 7-6.500" />
          <path d="M11 15q0-3 4-3.500v3.500z" fill="#fff" />
        </svg>
        <svg viewBox="0 0 21 18" className="ml-[11px] h-[18px] w-[21px]" fill="none" stroke="#fff" strokeWidth="1.100">
          <path d="M1 6h3l4-4v14l-4-4H1zM11 6q2 3 0 6M14 4q4 5 0 10M17 1.500q5 7.500 0 15" />
        </svg>
        <span className="ml-[12px] w-[30px] text-[14.500px] tracking-[-0.300px] text-white">ENG</span>
        <div className="ml-[13px] w-[80px] whitespace-nowrap text-center text-[15px] leading-[23px] tracking-[-0.300px] text-white">
          <div>17:43</div>
          <div>13-09-2020</div>
        </div>
        <div className="relative ml-[21px] h-[30px] w-[34px]">
          <svg viewBox="0 0 20 19" className="h-[19px] w-5">
            <path d="M0 0h20v16h-9l-4 3v-3H0z" fill="#fff" />
            <path d="M4 4.500h12M4 8h12M4 11.500h8" stroke="#1c2840" />
          </svg>
          <div className="absolute left-[10px] top-[9px] flex h-5 w-5 items-center justify-center rounded-full border border-[#868c96] bg-[#2a2e36] text-[13px] font-bold text-white">2</div>
        </div>
        <div className="ml-auto mr-[5px] h-[50px] w-px bg-[#7f8794]" />
      </div>
    </div>
  );
}

export default function App() {
  return (
    <div className="relative h-[1080px] w-[1920px] overflow-hidden bg-[#0448c2] font-['Open_Sans',sans-serif]">
      <Wallpaper />
      <div className="absolute left-[-0.500px] top-0 grid w-[380px] grid-cols-4">
        {leftItems.map(([icon, label, shortcut]) => (
          <DesktopItem key={label} icon={icon} label={label} shortcut={shortcut} />
        ))}
      </div>
      <div className="absolute left-[1519px] top-0 grid w-[380px] grid-cols-4">
        {rightItems.map(([icon, label]) => (
          <DesktopItem key={label} icon={icon} label={label} />
        ))}
      </div>
      <AppWindow />
      <Taskbar />
    </div>
  );
}
